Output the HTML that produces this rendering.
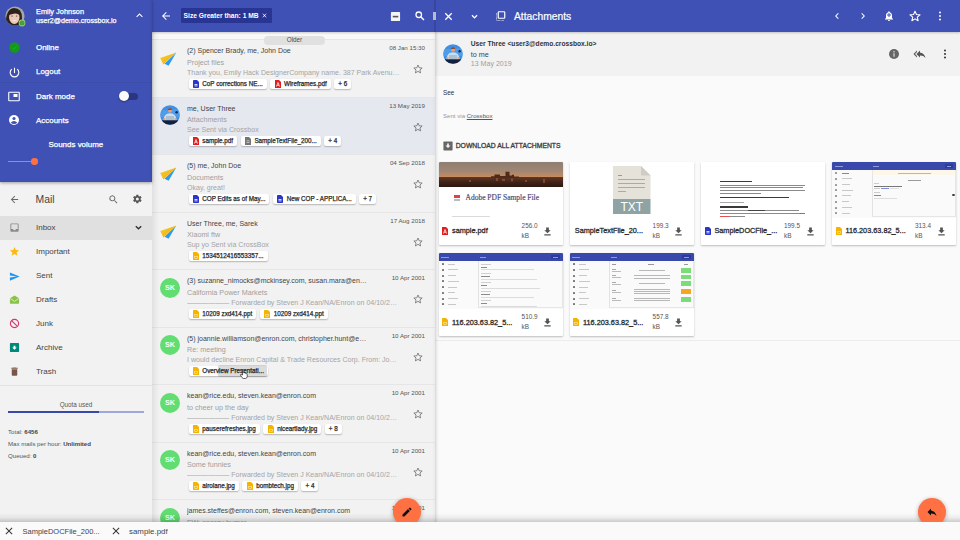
<!DOCTYPE html>
<html><head><meta charset="utf-8"><style>
*{margin:0;padding:0;box-sizing:border-box}
html,body{width:960px;height:540px;overflow:hidden;background:#fafafa;font-family:"Liberation Sans",sans-serif}
.abs{position:absolute}
svg{display:block}
#side{position:absolute;left:0;top:0;width:152px;height:540px;background:#f2f2f2}
#acct{position:absolute;left:0;top:0;width:152px;height:182px;background:#3f51b5;color:#fff;box-shadow:0 1px 3px rgba(0,0,0,.35)}
.mi{position:absolute;left:36px;font-size:7.95px;line-height:10px;-webkit-text-stroke:.25px #fff}
.si{position:absolute;left:36px;font-size:8px;color:#444;line-height:10px}
#list{position:absolute;left:152px;top:0;width:283px;height:540px;background:#f2f2f2;overflow:hidden;box-shadow:-1px 0 3px rgba(0,0,0,.25)}
.hdr{position:absolute;top:0;height:32px;background:#3f51b5}
.row{position:absolute;left:0;width:283px;height:57.5px;background:#f2f2f2}
.row::before{content:'';position:absolute;left:0;top:0;width:283px;height:1px;background:#e6e6e6}
.row.sel{background:#e6e8ef}
.av{position:absolute;left:8px;top:8.7px;width:20px;height:20px}
.av.plane{left:6px;top:8px;width:22px;height:22px}
.sk{width:20px;height:20px;border-radius:50%;background:#62dd72;color:#f4fff4;font-size:7.2px;font-weight:bold;text-align:center;line-height:20px}
.nm{position:absolute;left:35px;top:7px;width:180px;font-size:7px;line-height:9px;color:#444;white-space:nowrap;overflow:hidden;text-overflow:ellipsis}
.dt{position:absolute;right:10px;top:5.2px;font-size:6.2px;line-height:8px;color:#555;white-space:nowrap}
.sb{position:absolute;left:35px;top:18.4px;font-size:7.2px;line-height:9px;color:#9e9e9e;white-space:nowrap}
.pv{position:absolute;left:35px;top:28.3px;width:213px;font-size:7.05px;line-height:9px;color:#a5a5a5;white-space:nowrap;overflow:hidden;text-overflow:ellipsis}
.star{position:absolute;left:261px;top:25px}
.chips{position:absolute;left:36.5px;top:39.3px;height:10px;display:flex;gap:3.5px}
.chip{height:10px;background:#fff;border-radius:2px;box-shadow:0 1px 1.5px rgba(0,0,0,.25);display:flex;align-items:center;padding:0 4px 0 4.5px;gap:3.3px;font-size:6.3px;color:#2a2a2a;-webkit-text-stroke:.25px #2a2a2a;white-space:nowrap}
.chip svg{flex:none}
.chip span{position:relative;top:-.5px}
.chip.plus{justify-content:center;padding:0 4px}
#read{position:absolute;left:435px;top:0;width:525px;height:540px;background:#fafafa;box-shadow:-1px 0 3px rgba(0,0,0,.3)}
.card{position:absolute;width:124px;height:83px;background:#fff;box-shadow:0 1px 2px rgba(0,0,0,.25);border-radius:1px;overflow:hidden}
.thumb{position:absolute;left:0;top:0;width:124px;height:55.5px;overflow:hidden}
.cf{position:absolute;left:0;top:55.5px;width:124px;height:27.5px}
.cname{position:absolute;left:14px;top:8.8px;font-size:7.3px;line-height:9px;color:#2e2e2e;-webkit-text-stroke:.3px #2e2e2e;white-space:nowrap}
.csz{position:absolute;left:82.8px;top:3.6px;font-size:6.4px;line-height:10px;color:#555}
.cdl{position:absolute;left:103.7px;top:8px}
#bottom{position:absolute;left:0;top:521.5px;width:960px;height:18.5px;background:#fafafa}
#bshadow{position:absolute;left:0;top:513px;width:960px;height:8.5px;background:linear-gradient(rgba(0,0,0,0),rgba(0,0,0,.05) 50%,rgba(0,0,0,.19))}
.fab{position:absolute;width:28px;height:28px;border-radius:50%;background:#ff7043;box-shadow:0 1px 4px rgba(0,0,0,.3)}
</style></head>
<body><div id="read"><div class="abs" style="left:0;top:0;width:525px;height:32px;background:#3f51b5"></div><div class="abs" style="left:0;top:32px;width:525px;height:44px;background:#f2f2f2"></div><div class="abs" style="left:8.3px;top:44px"><svg width="20" height="20" viewBox="0 0 20 20"><defs><clipPath id="u3c"><circle cx="10" cy="10" r="9.8"/></clipPath></defs><g clip-path="url(#u3c)"><rect width="20" height="20" fill="#3f8fe3"/><path d="M0 6Q5 4 8 6Q13 3 20 5V12H0Z" fill="#5aa6ee" opacity=".6"/><path d="M3.5 16Q3.5 8.5 10 8.3Q16.5 8.5 16.5 16Z" fill="#c7def3"/><rect x="6" y="11" width="8" height="4.5" fill="#aebfcf"/><circle cx="4.6" cy="14" r="1.1" fill="#e8a27a"/><circle cx="15.4" cy="14" r="1.1" fill="#e8a27a"/><path d="M0 15.2H20V20H0Z" fill="#14213d"/><circle cx="10" cy="5.6" r="2.1" fill="#e8a27a"/><path d="M7.9 5.2Q8 3.1 10 3.2Q12.1 3.1 12.1 5.2Q11 4.3 7.9 5.2Z" fill="#8a3f1f"/><circle cx="16.6" cy="7.2" r="1.2" fill="#1d2a44"/></g></svg></div><div class="abs" style="left:35.8px;top:39.7px;font-size:6.66px;font-weight:bold;color:#333;white-space:nowrap">User Three &lt;user3@demo.crossbox.io&gt;</div><div class="abs" style="left:35.8px;top:50px;font-size:7.2px;color:#444;white-space:nowrap">to me</div><div class="abs" style="left:35.8px;top:59.7px;font-size:7.07px;color:#9e9e9e;white-space:nowrap">13 May 2019</div><svg class="abs" style="left:453px;top:48px" width="12" height="12" viewBox="0 0 24 24"><circle cx="12" cy="12" r="10" fill="#666"/><rect x="11" y="10.5" width="2" height="7" fill="#f2f2f2"/><circle cx="12" cy="7.5" r="1.3" fill="#f2f2f2"/></svg><svg class="abs" style="left:478px;top:48px" width="13" height="12" viewBox="0 0 24 24"><path d="M7 8V5l-7 7 7 7v-3l-4-4 4-4zm6 1V5l-7 7 7 7v-4.1c5 0 8.5 1.6 11 5.1-1-5-4-10-11-11z" fill="#555"/></svg><svg class="abs" style="left:504px;top:48px" width="12" height="12" viewBox="0 0 24 24"><circle cx="12" cy="5" r="2" fill="#333"/><circle cx="12" cy="12" r="2" fill="#333"/><circle cx="12" cy="19" r="2" fill="#333"/></svg><div class="abs" style="left:8px;top:89.3px;font-size:6.4px;color:#333">See</div><div class="abs" style="left:8px;top:111.5px;font-size:6.1px;color:#999;white-space:nowrap">Sent via <span style="color:#555;text-decoration:underline">Crossbox</span></div><svg class="abs" style="left:8px;top:141px" width="10" height="10" viewBox="0 0 24 24"><rect x="1" y="1" width="22" height="22" rx="2" fill="#666"/><path d="M12 17l-6-6h4V6h4v5h4z" fill="#f5f5f5"/></svg><div class="abs" style="left:20.7px;top:141.6px;font-size:6.8px;color:#3a3a3a;-webkit-text-stroke:.3px #3a3a3a;white-space:nowrap">DOWNLOAD ALL ATTACHMENTS</div></div><div id="cards"><div class="card" style="left:438.8px;top:162.2px"><div class="thumb" style="background:#fff"><div class="abs" style="left:0;top:0;width:124px;height:25px;background:linear-gradient(#8e7f74 0%,#a08672 35%,#bb8a64 54%,#c98d5e 59%,#5e3422 62%,#3e2216 82%,#2a1810 100%)"></div><svg class="abs" style="left:0;top:0" width="124" height="25" viewBox="0 0 124 25"><path d="M52 16V14.3H55.5V12.6H61V14H66.5V9.8H70.5V13.5H73V12.8H75V14.5H80V16Z" fill="#4e2a1a"/><path d="M57 16h2v3h-2zM63 17h3v2h-3zM72 16.5h2v3h-2zM30 18h2v2h-2zM104 17h2v4h-2zM86 18h2v2h-2z" fill="#b0603a" opacity=".55"/></svg><div class="abs" style="left:15.5px;top:33px;width:6px;height:6px;background:linear-gradient(#d44 0 45%,#fff 45% 60%,#bbb 60%)"></div><div class="abs" style="left:26.7px;top:31.3px;font-family:'Liberation Serif',serif;font-size:7.5px;line-height:9px;color:#50507a;-webkit-text-stroke:.2px #50507a;white-space:nowrap">Adobe PDF Sample File</div><div class="abs" style="left:13.7px;top:53.5px;width:38px;height:.7px;background:#dadada"></div></div><div class="cf"><div class="abs" style="left:3.7px;top:9.3px"><svg width="6" height="8" viewBox="0 0 12 16"><path d="M0 0H8L12 4V16H0Z" fill="#e02020"/><path d="M3 13L6 5L9 13M4.2 10.5H7.8" stroke="#fff" stroke-width="1.5" fill="none"/></svg></div><div class="cname" style="left:13.2px">sample.pdf</div><div class="csz">256.0<br>kB</div><svg class="cdl" width="11" height="11" viewBox="0 0 24 24"><path d="M19 9h-4V3H9v6H5l7 7 7-7zM5 18v2.5h14V18H5z" fill="#555"/></svg></div></div>
<div class="card" style="left:569.8px;top:162.2px"><div class="thumb" style="background:#fff"><svg class="abs" style="left:43.5px;top:3.8px" width="37.5" height="48" viewBox="0 0 37.5 48"><path d="M0 0H28L37.5 9.5V33H0Z" fill="#e4e2d9"/><path d="M28 0V9.5H37.5Z" fill="#cfcdc3"/><rect x="0" y="33" width="37.5" height="15" fill="#8fa3a4"/><text x="18.75" y="45" text-anchor="middle" font-family="Liberation Sans" font-size="12" fill="#fff">TXT</text><rect x="5" y="9" width="4" height="1" fill="#999"/><rect x="5" y="13" width="27" height="1" fill="#aaa"/><rect x="5" y="17" width="27" height="1" fill="#aaa"/><rect x="5" y="21" width="27" height="1" fill="#aaa"/><rect x="5" y="25" width="8" height="1" fill="#aaa"/></svg></div><div class="cf"><div class="cname" style="left:5px">SampleTextFile_20...</div><div class="csz">199.3<br>kB</div><svg class="cdl" width="11" height="11" viewBox="0 0 24 24"><path d="M19 9h-4V3H9v6H5l7 7 7-7zM5 18v2.5h14V18H5z" fill="#555"/></svg></div></div>
<div class="card" style="left:701.2px;top:162.2px"><div class="thumb" style="background:#fff"><div class="abs" style="left:19.1px;top:18.5px;width:31.8px;height:1.7px;background:#3a3a3a;"></div><div class="abs" style="left:19.1px;top:22.5px;width:84.4px;height:1.1px;background:#8a8a8a;"></div><div class="abs" style="left:19.1px;top:25.1px;width:83px;height:1.1px;background:#8a8a8a;"></div><div class="abs" style="left:19.1px;top:28px;width:84.4px;height:1.1px;background:#8a8a8a;"></div><div class="abs" style="left:19.1px;top:30.8px;width:40.7px;height:1.1px;background:#8a8a8a;"></div><div class="abs" style="left:19.1px;top:34.6px;width:68.8px;height:1.7px;background:#3a3a3a;"></div><div class="abs" style="left:19.1px;top:39.4px;width:23.5px;height:1.1px;background:#aaa;"></div><div class="abs" style="left:19.1px;top:44.3px;width:28.2px;height:1.7px;background:#3a3a3a;"></div><div class="abs" style="left:19.1px;top:48.2px;width:79.2px;height:1.1px;background:#8a8a8a;"></div><div class="abs" style="left:47px;top:48.2px;width:17px;height:1.1px;background:#444;"></div><div class="abs" style="left:19.1px;top:51.1px;width:80px;height:1.1px;background:#8a8a8a;"></div><div class="abs" style="left:99.2px;top:51.1px;width:4.3px;height:1.1px;background:#e45050;"></div><div class="abs" style="left:19.1px;top:53.8px;width:25px;height:1.1px;background:#8a8a8a;"></div><div class="abs" style="left:19.1px;top:53.8px;width:8.9px;height:1.1px;background:#e45050;"></div></div><div class="cf"><div class="abs" style="left:3.7px;top:9.3px"><svg width="6" height="8" viewBox="0 0 12 16"><path d="M0 1.5Q0 0 1.5 0H8L12 4V14.5Q12 16 10.5 16H1.5Q0 16 0 14.5Z" fill="#2b35c9"/><rect x="3" y="8" width="6" height="1.6" fill="#fff"/><rect x="3" y="11" width="6" height="1.6" fill="#fff"/></svg></div><div class="cname" style="left:13.2px">SampleDOCFile_...</div><div class="csz">199.5<br>kB</div><svg class="cdl" width="11" height="11" viewBox="0 0 24 24"><path d="M19 9h-4V3H9v6H5l7 7 7-7zM5 18v2.5h14V18H5z" fill="#555"/></svg></div></div>
<div class="card" style="left:832.2px;top:162.2px"><div class="thumb" style="background:#fafafa"><div class="abs" style="left:0px;top:0px;width:124px;height:8px;background:#3949ab;"></div><div class="abs" style="left:2.5px;top:3.4px;width:8px;height:1.2px;background:#8f9ad6;"></div><div class="abs" style="left:41px;top:3.4px;width:6px;height:1.2px;background:#8f9ad6;"></div><div class="abs" style="left:112.5px;top:2px;width:8.5px;height:4px;background:#2c3a9a;"></div><div class="abs" style="left:114.5px;top:3.5px;width:4.5px;height:1px;background:#8f9ad6;"></div><div class="abs" style="left:39.5px;top:8px;width:0.7px;height:46px;background:#e3e3e3;"></div><div class="abs" style="left:123.2px;top:8px;width:0.8px;height:46px;background:#e6e6e6;"></div><div class="abs" style="left:39.5px;top:53.6px;width:84.5px;height:0.8px;background:#e6e6e6;"></div><div class="abs" style="left:3px;top:9.8px;width:2px;height:2px;background:#999;border-radius:.5px"></div><div class="abs" style="left:9.5px;top:10.4px;width:7px;height:0.9px;background:#888;"></div><div class="abs" style="left:3px;top:15.5px;width:2px;height:2px;background:#999;border-radius:.5px"></div><div class="abs" style="left:9.5px;top:16.1px;width:10px;height:0.9px;background:#c8c8c8;"></div><div class="abs" style="left:3px;top:21.4px;width:2px;height:2px;background:#999;border-radius:.5px"></div><div class="abs" style="left:9.5px;top:22.0px;width:8px;height:0.9px;background:#c8c8c8;"></div><div class="abs" style="left:3px;top:26.9px;width:2px;height:2px;background:#999;border-radius:.5px"></div><div class="abs" style="left:9.5px;top:27.5px;width:11px;height:0.9px;background:#c8c8c8;"></div><div class="abs" style="left:3px;top:32.7px;width:2px;height:2px;background:#999;border-radius:.5px"></div><div class="abs" style="left:9.5px;top:33.300000000000004px;width:9px;height:0.9px;background:#c8c8c8;"></div><div class="abs" style="left:3px;top:38.5px;width:2px;height:2px;background:#999;border-radius:.5px"></div><div class="abs" style="left:9.5px;top:39.1px;width:7px;height:0.9px;background:#c8c8c8;"></div><div class="abs" style="left:3px;top:44.4px;width:2px;height:2px;background:#999;border-radius:.5px"></div><div class="abs" style="left:9.5px;top:45.0px;width:10px;height:0.9px;background:#c8c8c8;"></div><div class="abs" style="left:3px;top:50.1px;width:2px;height:2px;background:#999;border-radius:.5px"></div><div class="abs" style="left:9.5px;top:50.7px;width:8px;height:0.9px;background:#c8c8c8;"></div><div class="abs" style="left:66px;top:10.4px;width:33px;height:0.9px;background:#999;"></div><div class="abs" style="left:39.5px;top:8px;width:84px;height:4.6px;background:rgba(255,240,200,.35);"></div><div class="abs" style="left:76px;top:17.8px;width:13px;height:0.9px;background:#999;"></div><div class="abs" style="left:42px;top:20.6px;width:5px;height:0.8px;background:#ccc;"></div><div class="abs" style="left:42px;top:23.6px;width:28px;height:1px;background:#777;"></div><div class="abs" style="left:42px;top:26.3px;width:6px;height:0.8px;background:#ccc;"></div><div class="abs" style="left:49px;top:26.3px;width:8px;height:0.9px;background:#7e8fd6;"></div><div class="abs" style="left:58px;top:26.3px;width:9px;height:0.8px;background:#ddd;"></div><div class="abs" style="left:42px;top:29.9px;width:6px;height:0.8px;background:#ccc;"></div><div class="abs" style="left:42px;top:32.6px;width:7px;height:1px;background:#888;"></div><div class="abs" style="left:42px;top:35.5px;width:23px;height:0.8px;background:#ddd;"></div><div class="abs" style="left:119.5px;top:32px;width:3.2px;height:2.2px;background:#333;border-radius:50%"></div></div><div class="cf"><div class="abs" style="left:3.7px;top:9.3px"><svg width="6" height="8" viewBox="0 0 12 16"><path d="M0 1Q0 0 1 0H8L12 4V15Q12 16 11 16H1Q0 16 0 15Z" fill="#f4b400"/><rect x="3" y="8" width="6" height="5" fill="#fff" opacity=".9"/><rect x="4" y="9" width="4" height="3" fill="#f4b400"/></svg></div><div class="cname" style="left:13.2px">116.203.63.82_5...</div><div class="csz">313.4<br>kB</div><svg class="cdl" width="11" height="11" viewBox="0 0 24 24"><path d="M19 9h-4V3H9v6H5l7 7 7-7zM5 18v2.5h14V18H5z" fill="#555"/></svg></div></div>
<div class="card" style="left:438.8px;top:253.3px"><div class="thumb" style="background:#fafafa"><div class="abs" style="left:0px;top:0px;width:124px;height:8px;background:#3949ab;"></div><div class="abs" style="left:2.5px;top:3.4px;width:8px;height:1.2px;background:#8f9ad6;"></div><div class="abs" style="left:41px;top:3.4px;width:6px;height:1.2px;background:#8f9ad6;"></div><div class="abs" style="left:112.5px;top:2px;width:8.5px;height:4px;background:#2c3a9a;"></div><div class="abs" style="left:114.5px;top:3.5px;width:4.5px;height:1px;background:#8f9ad6;"></div><div class="abs" style="left:39.5px;top:8px;width:0.7px;height:46px;background:#e3e3e3;"></div><div class="abs" style="left:123.2px;top:8px;width:0.8px;height:46px;background:#e6e6e6;"></div><div class="abs" style="left:39.5px;top:53.6px;width:84.5px;height:0.8px;background:#e6e6e6;"></div><div class="abs" style="left:3px;top:9.8px;width:2px;height:2px;background:#777;border-radius:.5px"></div><div class="abs" style="left:9.5px;top:10.4px;width:7px;height:0.9px;background:#c8c8c8;"></div><div class="abs" style="left:3px;top:15.5px;width:2px;height:2px;background:#777;border-radius:.5px"></div><div class="abs" style="left:9.5px;top:16.1px;width:10px;height:0.9px;background:#c8c8c8;"></div><div class="abs" style="left:3px;top:21.4px;width:2px;height:2px;background:#777;border-radius:.5px"></div><div class="abs" style="left:9.5px;top:22.0px;width:8px;height:0.9px;background:#c8c8c8;"></div><div class="abs" style="left:3px;top:26.9px;width:2px;height:2px;background:#777;border-radius:.5px"></div><div class="abs" style="left:9.5px;top:27.5px;width:11px;height:0.9px;background:#c8c8c8;"></div><div class="abs" style="left:3px;top:32.7px;width:2px;height:2px;background:#777;border-radius:.5px"></div><div class="abs" style="left:9.5px;top:33.300000000000004px;width:9px;height:0.9px;background:#c8c8c8;"></div><div class="abs" style="left:3px;top:38.5px;width:2px;height:2px;background:#777;border-radius:.5px"></div><div class="abs" style="left:9.5px;top:39.1px;width:7px;height:0.9px;background:#c8c8c8;"></div><div class="abs" style="left:3px;top:44.4px;width:2px;height:2px;background:#777;border-radius:.5px"></div><div class="abs" style="left:9.5px;top:45.0px;width:10px;height:0.9px;background:#c8c8c8;"></div><div class="abs" style="left:3px;top:50.1px;width:2px;height:2px;background:#777;border-radius:.5px"></div><div class="abs" style="left:9.5px;top:50.7px;width:8px;height:0.9px;background:#c8c8c8;"></div><div class="abs" style="left:42px;top:10.799999999999999px;width:10px;height:0.8px;background:#d0d0d0;"></div><div class="abs" style="left:42px;top:13.3px;width:6px;height:1px;background:#8a8a8a;"></div><div class="abs" style="left:42px;top:16.2px;width:53px;height:0.7px;background:#dcdcdc;"></div><div class="abs" style="left:42px;top:19.6px;width:10px;height:0.8px;background:#d0d0d0;"></div><div class="abs" style="left:42px;top:22.5px;width:9px;height:1px;background:#8a8a8a;"></div><div class="abs" style="left:42px;top:25.4px;width:56px;height:0.7px;background:#dcdcdc;"></div><div class="abs" style="left:42px;top:28.8px;width:10px;height:0.8px;background:#d0d0d0;"></div><div class="abs" style="left:42px;top:31.700000000000003px;width:6px;height:1px;background:#8a8a8a;"></div><div class="abs" style="left:42px;top:34.6px;width:59px;height:0.7px;background:#dcdcdc;"></div><div class="abs" style="left:42px;top:37.800000000000004px;width:10px;height:0.8px;background:#d0d0d0;"></div><div class="abs" style="left:42px;top:41.0px;width:9px;height:1px;background:#8a8a8a;"></div><div class="abs" style="left:42px;top:43.800000000000004px;width:53px;height:0.7px;background:#dcdcdc;"></div><div class="abs" style="left:42px;top:47.2px;width:10px;height:0.8px;background:#d0d0d0;"></div><div class="abs" style="left:42px;top:50.2px;width:6px;height:1px;background:#8a8a8a;"></div><div class="abs" style="left:42px;top:53.0px;width:56px;height:0.7px;background:#dcdcdc;"></div></div><div class="cf"><div class="abs" style="left:3.7px;top:9.3px"><svg width="6" height="8" viewBox="0 0 12 16"><path d="M0 1Q0 0 1 0H8L12 4V15Q12 16 11 16H1Q0 16 0 15Z" fill="#f4b400"/><rect x="3" y="8" width="6" height="5" fill="#fff" opacity=".9"/><rect x="4" y="9" width="4" height="3" fill="#f4b400"/></svg></div><div class="cname" style="left:13.2px">116.203.63.82_5...</div><div class="csz">510.9<br>kB</div><svg class="cdl" width="11" height="11" viewBox="0 0 24 24"><path d="M19 9h-4V3H9v6H5l7 7 7-7zM5 18v2.5h14V18H5z" fill="#555"/></svg></div></div>
<div class="card" style="left:569.8px;top:253.3px"><div class="thumb" style="background:#fafafa"><div class="abs" style="left:0px;top:0px;width:124px;height:8px;background:#3949ab;"></div><div class="abs" style="left:2.5px;top:3.4px;width:8px;height:1.2px;background:#8f9ad6;"></div><div class="abs" style="left:41px;top:3.4px;width:6px;height:1.2px;background:#8f9ad6;"></div><div class="abs" style="left:112.5px;top:2px;width:8.5px;height:4px;background:#2c3a9a;"></div><div class="abs" style="left:114.5px;top:3.5px;width:4.5px;height:1px;background:#8f9ad6;"></div><div class="abs" style="left:39.5px;top:8px;width:0.7px;height:46px;background:#e3e3e3;"></div><div class="abs" style="left:123.2px;top:8px;width:0.8px;height:46px;background:#e6e6e6;"></div><div class="abs" style="left:39.5px;top:53.6px;width:84.5px;height:0.8px;background:#e6e6e6;"></div><div class="abs" style="left:3px;top:9.8px;width:2px;height:2px;background:#777;border-radius:.5px"></div><div class="abs" style="left:9.5px;top:10.4px;width:7px;height:0.9px;background:#c8c8c8;"></div><div class="abs" style="left:3px;top:15.5px;width:2px;height:2px;background:#777;border-radius:.5px"></div><div class="abs" style="left:9.5px;top:16.1px;width:10px;height:0.9px;background:#c8c8c8;"></div><div class="abs" style="left:3px;top:21.4px;width:2px;height:2px;background:#777;border-radius:.5px"></div><div class="abs" style="left:9.5px;top:22.0px;width:8px;height:0.9px;background:#c8c8c8;"></div><div class="abs" style="left:3px;top:26.9px;width:2px;height:2px;background:#777;border-radius:.5px"></div><div class="abs" style="left:9.5px;top:27.5px;width:11px;height:0.9px;background:#c8c8c8;"></div><div class="abs" style="left:3px;top:32.7px;width:2px;height:2px;background:#777;border-radius:.5px"></div><div class="abs" style="left:9.5px;top:33.300000000000004px;width:9px;height:0.9px;background:#c8c8c8;"></div><div class="abs" style="left:3px;top:38.5px;width:2px;height:2px;background:#777;border-radius:.5px"></div><div class="abs" style="left:9.5px;top:39.1px;width:7px;height:0.9px;background:#c8c8c8;"></div><div class="abs" style="left:3px;top:44.4px;width:2px;height:2px;background:#777;border-radius:.5px"></div><div class="abs" style="left:9.5px;top:45.0px;width:10px;height:0.9px;background:#c8c8c8;"></div><div class="abs" style="left:3px;top:50.1px;width:2px;height:2px;background:#777;border-radius:.5px"></div><div class="abs" style="left:9.5px;top:50.7px;width:8px;height:0.9px;background:#c8c8c8;"></div><div class="abs" style="left:42px;top:11.2px;width:4px;height:0.9px;background:#999;"></div><div class="abs" style="left:78px;top:11.2px;width:6px;height:0.9px;background:#999;"></div><div class="abs" style="left:114px;top:11.2px;width:4px;height:0.9px;background:#999;"></div><div class="abs" style="left:42px;top:15.600000000000001px;width:4px;height:0.8px;background:#aaa;"></div><div class="abs" style="left:42px;top:17.6px;width:9px;height:0.8px;background:#bbb;"></div><div class="abs" style="left:69.0px;top:16.700000000000003px;width:26px;height:0.8px;background:#b8b8b8;"></div><div class="abs" style="left:111px;top:14.900000000000002px;width:10.5px;height:4.4px;background:#7ddc7a;"></div><div class="abs" style="left:42px;top:22.2px;width:4px;height:0.8px;background:#aaa;"></div><div class="abs" style="left:42px;top:24.2px;width:9px;height:0.8px;background:#bbb;"></div><div class="abs" style="left:64.0px;top:22.2px;width:36px;height:0.8px;background:#b8b8b8;"></div><div class="abs" style="left:64.0px;top:24.400000000000002px;width:36px;height:0.8px;background:#b8b8b8;"></div><div class="abs" style="left:111px;top:21.5px;width:10.5px;height:4.4px;background:#7ddc7a;"></div><div class="abs" style="left:42px;top:28.8px;width:4px;height:0.8px;background:#aaa;"></div><div class="abs" style="left:42px;top:30.8px;width:9px;height:0.8px;background:#bbb;"></div><div class="abs" style="left:69.0px;top:29.900000000000002px;width:26px;height:0.8px;background:#b8b8b8;"></div><div class="abs" style="left:111px;top:28.1px;width:10.5px;height:4.4px;background:#7ddc7a;"></div><div class="abs" style="left:42px;top:36.7px;width:4px;height:0.8px;background:#aaa;"></div><div class="abs" style="left:42px;top:38.7px;width:9px;height:0.8px;background:#bbb;"></div><div class="abs" style="left:64.0px;top:35.6px;width:36px;height:0.8px;background:#b8b8b8;"></div><div class="abs" style="left:64.0px;top:37.800000000000004px;width:36px;height:0.8px;background:#b8b8b8;"></div><div class="abs" style="left:64.0px;top:40.00000000000001px;width:36px;height:0.8px;background:#b8b8b8;"></div><div class="abs" style="left:111px;top:36.0px;width:10.5px;height:4.4px;background:#f5a623;"></div><div class="abs" style="left:42px;top:44.6px;width:4px;height:0.8px;background:#aaa;"></div><div class="abs" style="left:42px;top:46.6px;width:9px;height:0.8px;background:#bbb;"></div><div class="abs" style="left:64.0px;top:44.6px;width:36px;height:0.8px;background:#b8b8b8;"></div><div class="abs" style="left:64.0px;top:46.800000000000004px;width:36px;height:0.8px;background:#b8b8b8;"></div><div class="abs" style="left:111px;top:43.9px;width:10.5px;height:4.4px;background:#7ddc7a;"></div></div><div class="cf"><div class="abs" style="left:3.7px;top:9.3px"><svg width="6" height="8" viewBox="0 0 12 16"><path d="M0 1Q0 0 1 0H8L12 4V15Q12 16 11 16H1Q0 16 0 15Z" fill="#f4b400"/><rect x="3" y="8" width="6" height="5" fill="#fff" opacity=".9"/><rect x="4" y="9" width="4" height="3" fill="#f4b400"/></svg></div><div class="cname" style="left:13.2px">116.203.63.82_5...</div><div class="csz">557.8<br>kB</div><svg class="cdl" width="11" height="11" viewBox="0 0 24 24"><path d="M19 9h-4V3H9v6H5l7 7 7-7zM5 18v2.5h14V18H5z" fill="#555"/></svg></div></div></div><div class="abs" style="left:435px;top:340px;width:525px;height:1px;background:#ececec"></div><div class="abs" style="left:435px;top:32px;width:4px;height:508px;background:linear-gradient(90deg,rgba(0,0,0,.09),rgba(0,0,0,0))"></div><div id="list"><div class="abs" style="left:0;top:32px;width:283px;height:8px;background:#f8f8f8"></div><div class="row" style="top:39.3px"><div class="av plane"><svg width="22" height="22" viewBox="0 0 22 22"><defs><linearGradient id="pg" x1="0" y1="0" x2="1" y2="1"><stop offset="0" stop-color="#f9d02a"/><stop offset=".6" stop-color="#f0b81c"/><stop offset="1" stop-color="#d9940e"/></linearGradient></defs><path d="M18.3 5.5L6.5 16.8L10.6 18.8Z" fill="#2a9bf0"/><path d="M18.3 5.5L2.2 11L5.4 17.5Z" fill="url(#pg)"/></svg></div>
<div class="nm">(2) Spencer Brady, me, John Doe</div><div class="dt">08 Jan 15:30</div>
<div class="sb">Project files</div><div class="pv">Thank you, Emily Hack DesignerCompany name. 387 Park Avenue South</div>
<svg class="star" width="10" height="10" viewBox="0 0 24 24"><path d="M12 2.5l2.9 6.6 7.1.6-5.4 4.7 1.6 7-6.2-3.7-6.2 3.7 1.6-7L2 9.7l7.1-.6z" fill="none" stroke="#6a6a6a" stroke-width="1.9" stroke-linejoin="round"/></svg>
<div class="chips"><div class="chip"><svg width="6" height="8" viewBox="0 0 12 16"><path d="M0 1.5Q0 0 1.5 0H8L12 4V14.5Q12 16 10.5 16H1.5Q0 16 0 14.5Z" fill="#2b35c9"/><rect x="3" y="8" width="6" height="1.6" fill="#fff"/><rect x="3" y="11" width="6" height="1.6" fill="#fff"/></svg><span>CoP corrections NE...</span></div><div class="chip"><svg width="6" height="8" viewBox="0 0 12 16"><path d="M0 0H8L12 4V16H0Z" fill="#e02020"/><path d="M3 13L6 5L9 13M4.2 10.5H7.8" stroke="#fff" stroke-width="1.5" fill="none"/></svg><span>Wireframes.pdf</span></div><div class="chip plus"><span>+ 6</span></div></div></div>
<div class="row sel" style="top:96.8px"><div class="av"><svg width="20" height="20" viewBox="0 0 20 20"><defs><clipPath id="u3c"><circle cx="10" cy="10" r="9.8"/></clipPath></defs><g clip-path="url(#u3c)"><rect width="20" height="20" fill="#3f8fe3"/><path d="M0 6Q5 4 8 6Q13 3 20 5V12H0Z" fill="#5aa6ee" opacity=".6"/><path d="M3.5 16Q3.5 8.5 10 8.3Q16.5 8.5 16.5 16Z" fill="#c7def3"/><rect x="6" y="11" width="8" height="4.5" fill="#aebfcf"/><circle cx="4.6" cy="14" r="1.1" fill="#e8a27a"/><circle cx="15.4" cy="14" r="1.1" fill="#e8a27a"/><path d="M0 15.2H20V20H0Z" fill="#14213d"/><circle cx="10" cy="5.6" r="2.1" fill="#e8a27a"/><path d="M7.9 5.2Q8 3.1 10 3.2Q12.1 3.1 12.1 5.2Q11 4.3 7.9 5.2Z" fill="#8a3f1f"/><circle cx="16.6" cy="7.2" r="1.2" fill="#1d2a44"/></g></svg></div>
<div class="nm">me, User Three</div><div class="dt">13 May 2019</div>
<div class="sb">Attachments</div><div class="pv">See Sent via Crossbox</div>
<svg class="star" width="10" height="10" viewBox="0 0 24 24"><path d="M12 2.5l2.9 6.6 7.1.6-5.4 4.7 1.6 7-6.2-3.7-6.2 3.7 1.6-7L2 9.7l7.1-.6z" fill="none" stroke="#6a6a6a" stroke-width="1.9" stroke-linejoin="round"/></svg>
<div class="chips"><div class="chip"><svg width="6" height="8" viewBox="0 0 12 16"><path d="M0 0H8L12 4V16H0Z" fill="#e02020"/><path d="M3 13L6 5L9 13M4.2 10.5H7.8" stroke="#fff" stroke-width="1.5" fill="none"/></svg><span>sample.pdf</span></div><div class="chip"><svg width="6" height="8" viewBox="0 0 12 16"><path d="M0 0H8L12 4V16H0Z" fill="#757575"/><rect x="3" y="7" width="6" height="1.4" fill="#ddd"/><rect x="3" y="10" width="6" height="1.4" fill="#ddd"/></svg><span>SampleTextFile_200...</span></div><div class="chip plus"><span>+ 4</span></div></div></div>
<div class="row" style="top:154.3px"><div class="av plane"><svg width="22" height="22" viewBox="0 0 22 22"><defs><linearGradient id="pg" x1="0" y1="0" x2="1" y2="1"><stop offset="0" stop-color="#f9d02a"/><stop offset=".6" stop-color="#f0b81c"/><stop offset="1" stop-color="#d9940e"/></linearGradient></defs><path d="M18.3 5.5L6.5 16.8L10.6 18.8Z" fill="#2a9bf0"/><path d="M18.3 5.5L2.2 11L5.4 17.5Z" fill="url(#pg)"/></svg></div>
<div class="nm">(5) me, John Doe</div><div class="dt">04 Sep 2018</div>
<div class="sb">Documents</div><div class="pv">Okay, great!</div>
<svg class="star" width="10" height="10" viewBox="0 0 24 24"><path d="M12 2.5l2.9 6.6 7.1.6-5.4 4.7 1.6 7-6.2-3.7-6.2 3.7 1.6-7L2 9.7l7.1-.6z" fill="none" stroke="#6a6a6a" stroke-width="1.9" stroke-linejoin="round"/></svg>
<div class="chips"><div class="chip"><svg width="6" height="8" viewBox="0 0 12 16"><path d="M0 1.5Q0 0 1.5 0H8L12 4V14.5Q12 16 10.5 16H1.5Q0 16 0 14.5Z" fill="#2b35c9"/><rect x="3" y="8" width="6" height="1.6" fill="#fff"/><rect x="3" y="11" width="6" height="1.6" fill="#fff"/></svg><span>COP Edits as of May...</span></div><div class="chip"><svg width="6" height="8" viewBox="0 0 12 16"><path d="M0 1.5Q0 0 1.5 0H8L12 4V14.5Q12 16 10.5 16H1.5Q0 16 0 14.5Z" fill="#2b35c9"/><rect x="3" y="8" width="6" height="1.6" fill="#fff"/><rect x="3" y="11" width="6" height="1.6" fill="#fff"/></svg><span>New COP - APPLICA...</span></div><div class="chip plus"><span>+ 7</span></div></div></div>
<div class="row" style="top:211.8px"><div class="av plane"><svg width="22" height="22" viewBox="0 0 22 22"><defs><linearGradient id="pg" x1="0" y1="0" x2="1" y2="1"><stop offset="0" stop-color="#f9d02a"/><stop offset=".6" stop-color="#f0b81c"/><stop offset="1" stop-color="#d9940e"/></linearGradient></defs><path d="M18.3 5.5L6.5 16.8L10.6 18.8Z" fill="#2a9bf0"/><path d="M18.3 5.5L2.2 11L5.4 17.5Z" fill="url(#pg)"/></svg></div>
<div class="nm">User Three, me, Sarek</div><div class="dt">17 Aug 2018</div>
<div class="sb">Xiaomi ftw</div><div class="pv">Sup yo Sent via CrossBox</div>
<svg class="star" width="10" height="10" viewBox="0 0 24 24"><path d="M12 2.5l2.9 6.6 7.1.6-5.4 4.7 1.6 7-6.2-3.7-6.2 3.7 1.6-7L2 9.7l7.1-.6z" fill="none" stroke="#6a6a6a" stroke-width="1.9" stroke-linejoin="round"/></svg>
<div class="chips"><div class="chip"><svg width="6" height="8" viewBox="0 0 12 16"><path d="M0 1Q0 0 1 0H8L12 4V15Q12 16 11 16H1Q0 16 0 15Z" fill="#f4b400"/><rect x="3" y="8" width="6" height="5" fill="#fff" opacity=".9"/><rect x="4" y="9" width="4" height="3" fill="#f4b400"/></svg><span>1534512416553357...</span></div></div></div>
<div class="row" style="top:269.3px"><div class="av"><div class="sk">SK</div></div>
<div class="nm">(3) suzanne_nimocks@mckinsey.com, susan.mara@enron.com</div><div class="dt">10 Apr 2001</div>
<div class="sb">California Power Markets</div><div class="pv">—————— Forwarded by Steven J Kean/NA/Enron on 04/10/2001</div>
<svg class="star" width="10" height="10" viewBox="0 0 24 24"><path d="M12 2.5l2.9 6.6 7.1.6-5.4 4.7 1.6 7-6.2-3.7-6.2 3.7 1.6-7L2 9.7l7.1-.6z" fill="none" stroke="#6a6a6a" stroke-width="1.9" stroke-linejoin="round"/></svg>
<div class="chips"><div class="chip"><svg width="6" height="8" viewBox="0 0 12 16"><path d="M0 1Q0 0 1 0H8L12 4V15Q12 16 11 16H1Q0 16 0 15Z" fill="#f4b400"/><rect x="3" y="8" width="6" height="5" fill="#fff" opacity=".9"/><rect x="4" y="9" width="4" height="3" fill="#f4b400"/></svg><span>10209 zxd414.ppt</span></div><div class="chip"><svg width="6" height="8" viewBox="0 0 12 16"><path d="M0 1Q0 0 1 0H8L12 4V15Q12 16 11 16H1Q0 16 0 15Z" fill="#f4b400"/><rect x="3" y="8" width="6" height="5" fill="#fff" opacity=".9"/><rect x="4" y="9" width="4" height="3" fill="#f4b400"/></svg><span>10209 zxd414.ppt</span></div></div></div>
<div class="row" style="top:326.8px"><div class="av"><div class="sk">SK</div></div>
<div class="nm">(5) joannie.williamson@enron.com, christopher.hunt@enron.com</div><div class="dt">10 Apr 2001</div>
<div class="sb">Re: meeting</div><div class="pv">I would decline Enron Capital &amp; Trade Resources Corp. From: Joannie</div>
<svg class="star" width="10" height="10" viewBox="0 0 24 24"><path d="M12 2.5l2.9 6.6 7.1.6-5.4 4.7 1.6 7-6.2-3.7-6.2 3.7 1.6-7L2 9.7l7.1-.6z" fill="none" stroke="#6a6a6a" stroke-width="1.9" stroke-linejoin="round"/></svg>
<div class="chips"><div class="chip"><svg width="6" height="8" viewBox="0 0 12 16"><path d="M0 1Q0 0 1 0H8L12 4V15Q12 16 11 16H1Q0 16 0 15Z" fill="#f4b400"/><rect x="3" y="8" width="6" height="5" fill="#fff" opacity=".9"/><rect x="4" y="9" width="4" height="3" fill="#f4b400"/></svg><span>Overview Presentati...</span></div></div><div class="abs" style="left:66px;top:38.6px;width:49px;height:12px;border-radius:2px;background:rgba(0,0,0,.14)"></div><svg class="abs" style="left:87.5px;top:42.5px" width="8" height="10" viewBox="0 0 16 20"><path d="M5 1.5Q6.5 0.5 7.5 1.5V8L8.5 7.5Q10 7 10.5 8.5Q12 8 12.5 9.5Q14 9 14.5 11V15Q14 18.5 11 19H7.5Q5.5 19 4 17L1 12.5Q0.5 11 2 10.8L5 12Z" fill="#fff" stroke="#111" stroke-width="1.3" stroke-linejoin="round"/></svg></div>
<div class="row" style="top:384.3px"><div class="av"><div class="sk">SK</div></div>
<div class="nm">kean@rice.edu, steven.kean@enron.com</div><div class="dt">10 Apr 2001</div>
<div class="sb">to cheer up the day</div><div class="pv">—————— Forwarded by Steven J Kean/NA/Enron on 04/10/2001</div>
<svg class="star" width="10" height="10" viewBox="0 0 24 24"><path d="M12 2.5l2.9 6.6 7.1.6-5.4 4.7 1.6 7-6.2-3.7-6.2 3.7 1.6-7L2 9.7l7.1-.6z" fill="none" stroke="#6a6a6a" stroke-width="1.9" stroke-linejoin="round"/></svg>
<div class="chips"><div class="chip"><svg width="6" height="8" viewBox="0 0 12 16"><path d="M0 1Q0 0 1 0H8L12 4V15Q12 16 11 16H1Q0 16 0 15Z" fill="#f4b400"/><rect x="3" y="8" width="6" height="5" fill="#fff" opacity=".9"/><rect x="4" y="9" width="4" height="3" fill="#f4b400"/></svg><span>pauserefreshes.jpg</span></div><div class="chip"><svg width="6" height="8" viewBox="0 0 12 16"><path d="M0 1Q0 0 1 0H8L12 4V15Q12 16 11 16H1Q0 16 0 15Z" fill="#f4b400"/><rect x="3" y="8" width="6" height="5" fill="#fff" opacity=".9"/><rect x="4" y="9" width="4" height="3" fill="#f4b400"/></svg><span>niceartlady.jpg</span></div><div class="chip plus"><span>+ 8</span></div></div></div>
<div class="row" style="top:441.8px"><div class="av"><div class="sk">SK</div></div>
<div class="nm">kean@rice.edu, steven.kean@enron.com</div><div class="dt">10 Apr 2001</div>
<div class="sb">Some funnies</div><div class="pv">—————— Forwarded by Steven J Kean/NA/Enron on 04/10/2001</div>
<svg class="star" width="10" height="10" viewBox="0 0 24 24"><path d="M12 2.5l2.9 6.6 7.1.6-5.4 4.7 1.6 7-6.2-3.7-6.2 3.7 1.6-7L2 9.7l7.1-.6z" fill="none" stroke="#6a6a6a" stroke-width="1.9" stroke-linejoin="round"/></svg>
<div class="chips"><div class="chip"><svg width="6" height="8" viewBox="0 0 12 16"><path d="M0 1Q0 0 1 0H8L12 4V15Q12 16 11 16H1Q0 16 0 15Z" fill="#f4b400"/><rect x="3" y="8" width="6" height="5" fill="#fff" opacity=".9"/><rect x="4" y="9" width="4" height="3" fill="#f4b400"/></svg><span>airolane.jpg</span></div><div class="chip"><svg width="6" height="8" viewBox="0 0 12 16"><path d="M0 1Q0 0 1 0H8L12 4V15Q12 16 11 16H1Q0 16 0 15Z" fill="#f4b400"/><rect x="3" y="8" width="6" height="5" fill="#fff" opacity=".9"/><rect x="4" y="9" width="4" height="3" fill="#f4b400"/></svg><span>bombtech.jpg</span></div><div class="chip plus"><span>+ 4</span></div></div></div>
<div class="row" style="top:499.3px"><div class="av"><div class="sk">SK</div></div>
<div class="nm">james.steffes@enron.com, steven.kean@enron.com</div><div class="dt">10 Apr 2001</div>
<div class="sb">FW: energy humor</div><div class="pv"></div>
<svg class="star" width="10" height="10" viewBox="0 0 24 24"><path d="M12 2.5l2.9 6.6 7.1.6-5.4 4.7 1.6 7-6.2-3.7-6.2 3.7 1.6-7L2 9.7l7.1-.6z" fill="none" stroke="#6a6a6a" stroke-width="1.9" stroke-linejoin="round"/></svg>
<div class="chips"></div></div><div class="abs" style="left:112px;top:36px;width:61px;height:8.5px;border-radius:4px;background:#e0e0e0;font-size:6.3px;line-height:8.5px;text-align:center;color:#4a4a4a">Older</div><div class="abs" style="left:0;top:0;width:7px;height:540px;background:linear-gradient(90deg,rgba(0,0,0,.07),rgba(0,0,0,0))"></div><div class="abs" style="left:280px;top:32px;width:3px;height:508px;background:linear-gradient(90deg,rgba(0,0,0,0),rgba(0,0,0,.03))"></div></div><div class="abs" style="left:152px;top:0;width:808px;height:32px;background:#3f51b5;box-shadow:0 1px 2px rgba(0,0,0,.2)"></div><div class="abs" style="left:434px;top:0;width:2px;height:32px;background:rgba(0,0,0,.12)"></div><svg class="abs" style="left:160px;top:10px" width="12" height="12" viewBox="0 0 24 24"><path d="M20 11H7.8l5.6-5.6L12 4l-8 8 8 8 1.4-1.4L7.8 13H20z" fill="#fff"/></svg><div class="abs" style="left:180.5px;top:8px;width:91px;height:15.4px;background:#283593;border-radius:1px"></div><div class="abs" style="left:183.6px;top:12px;font-size:6.7px;font-weight:bold;color:#fff;white-space:nowrap">Size Greater than: 1 MB</div><svg class="abs" style="left:261px;top:12.3px" width="7" height="7" viewBox="0 0 24 24"><path d="M19 6.4L17.6 5 12 10.6 6.4 5 5 6.4 10.6 12 5 17.6 6.4 19 12 13.4 17.6 19 19 17.6 13.4 12z" fill="#fff"/></svg><svg class="abs" style="left:390px;top:10.5px" width="11" height="11" viewBox="0 0 24 24"><rect x="2" y="2" width="20" height="20" rx="2" fill="#f4f4f4"/><rect x="6" y="10.5" width="12" height="3.5" fill="#555"/></svg><svg class="abs" style="left:414px;top:10px" width="12" height="12" viewBox="0 0 24 24"><circle cx="9.5" cy="9.5" r="5.5" stroke="#fff" stroke-width="2.6" fill="none"/><path d="M13.5 13.5L20 20" stroke="#fff" stroke-width="3"/></svg><div class="abs" style="left:433px;top:12px;width:2.8px;height:8px;background:#b8bcc8"></div><svg class="abs" style="left:443px;top:10.5px" width="11" height="11" viewBox="0 0 24 24"><path d="M5 5L19 19M19 5L5 19" stroke="#fff" stroke-width="2.8"/></svg><svg class="abs" style="left:469px;top:10.5px" width="11" height="11" viewBox="0 0 24 24"><path d="M6.5 9.5L12 15L17.5 9.5" stroke="#fff" stroke-width="3" fill="none"/></svg><svg class="abs" style="left:495px;top:10px" width="12" height="12" viewBox="0 0 24 24"><path d="M3 6V21H18" stroke="#c5cae9" stroke-width="1.8" stroke-dasharray="1.6 1" fill="none"/><rect x="6.5" y="3.5" width="13" height="13" rx="1.5" fill="none" stroke="#fff" stroke-width="2.4"/></svg><div class="abs" style="left:514px;top:11px;font-size:10.3px;color:#fff;-webkit-text-stroke:.2px #fff;white-space:nowrap">Attachments</div><svg class="abs" style="left:831px;top:10px" width="12" height="12" viewBox="0 0 24 24"><path d="M15.4 7.4L14 6l-6 6 6 6 1.4-1.4-4.6-4.6z" fill="#fff"/></svg><svg class="abs" style="left:857px;top:10px" width="12" height="12" viewBox="0 0 24 24"><path d="M10 6L8.6 7.4l4.6 4.6-4.6 4.6L10 18l6-6z" fill="#fff"/></svg><svg class="abs" style="left:883px;top:10px" width="12" height="12" viewBox="0 0 24 24"><path d="M12 22c1.1 0 2-.9 2-2h-4c0 1.1.9 2 2 2zm6-6v-5c0-3.1-1.6-5.6-4.5-6.3V4c0-.8-.7-1.5-1.5-1.5s-1.5.7-1.5 1.5v.7C7.6 5.4 6 7.9 6 11v5l-2 2v1h16v-1l-2-2zm-2-5h-3v3h-2v-3H8V9h3V6h2v3h3z" fill="#fff"/></svg><svg class="abs" style="left:909px;top:10px" width="12" height="12" viewBox="0 0 24 24"><path d="M12 2.5l2.9 6.6 7.1.6-5.4 4.7 1.6 7-6.2-3.7-6.2 3.7 1.6-7L2 9.7l7.1-.6z" fill="none" stroke="#fff" stroke-width="2.2" stroke-linejoin="round"/></svg><svg class="abs" style="left:934px;top:10px" width="12" height="12" viewBox="0 0 24 24"><circle cx="12" cy="5" r="2" fill="#fff"/><circle cx="12" cy="12" r="2" fill="#fff"/><circle cx="12" cy="19" r="2" fill="#fff"/></svg><div id="side"><div id="acct"><svg class="abs" style="left:5.3px;top:6.3px" width="24" height="24" viewBox="0 0 24 24"><defs><clipPath id="cav"><circle cx="10" cy="10" r="9.6"/></clipPath></defs><g clip-path="url(#cav)"><rect width="20" height="20" fill="#a9a7a4"/><path d="M1 20Q0 3 9 2Q17 2 17 12Q17 18 15 20Z" fill="#2e211b"/><ellipse cx="9.3" cy="11.3" rx="5.2" ry="6.6" fill="#eccab8"/><path d="M4 9Q5 3.5 10 3.8Q14 4.5 14.5 9Q11.5 5.8 4 9Z" fill="#2e211b"/><path d="M6.8 13.8Q9.5 16 12 13.8Q9.5 14.8 6.8 13.8Z" fill="#fff"/><ellipse cx="7" cy="10" rx=".8" ry=".5" fill="#5a3a30"/><ellipse cx="11.6" cy="10" rx=".8" ry=".5" fill="#5a3a30"/></g><circle cx="17" cy="17" r="3.4" fill="#9ccc65"/><circle cx="17" cy="17" r="2.5" fill="#43a047"/></svg><div class="mi" style="top:7px;font-size:7.4px">Emily Johnson</div><div class="mi" style="top:16px;font-size:7.1px">user2@demo.crossbox.io</div><svg class="abs" style="left:132.5px;top:9px" width="13" height="13" viewBox="0 0 24 24"><path d="M7.4 15.4L12 10.8l4.6 4.6L18 14l-6-6-6 6z" fill="#fff"/></svg><svg class="abs" style="left:8.5px;top:42.2px" width="11" height="11" viewBox="0 0 22 22"><circle cx="11" cy="11" r="10.5" fill="#139a1a"/><path d="M6.5 11.5l3 3 6-6" stroke="#2fb236" stroke-width="1.5" fill="none"/></svg><div class="mi" style="top:42.5px;">Online</div><svg class="abs" style="left:7.5px;top:65.5px" width="13" height="13" viewBox="0 0 24 24"><path d="M13 3h-2v10h2V3zm4.8 2.2l-1.4 1.4A7 7 0 1 1 7.6 6.6L6.2 5.2A9 9 0 1 0 17.8 5.2z" fill="#fff"/></svg><div class="mi" style="top:67px;">Logout</div><div class="abs" style="left:0px;top:81.7px;width:152px;height:0.8px;background:rgba(0,0,0,.06);"></div><svg class="abs" style="left:8px;top:90.5px" width="12" height="11" viewBox="0 0 24 22"><rect x="1.5" y="2.5" width="21" height="17" rx="1" fill="none" stroke="#fff" stroke-width="2.2"/><rect x="11" y="6" width="8" height="6" fill="#fff"/></svg><div class="mi" style="top:91.7px;">Dark mode</div><div class="abs" style="left:119px;top:92.5px;width:19px;height:7px;border-radius:4px;background:#2a3780"></div><div class="abs" style="left:119px;top:91px;width:10px;height:10px;border-radius:50%;background:#fafafa;box-shadow:0 1px 2px rgba(0,0,0,.3)"></div><svg class="abs" style="left:8px;top:114px" width="12" height="12" viewBox="0 0 24 24"><circle cx="12" cy="12" r="10" fill="#fff"/><circle cx="12" cy="9" r="3.2" fill="#3f51b5"/><path d="M5.5 17.5Q8 13.8 12 13.8Q16 13.8 18.5 17.5Q16 20 12 20Q8 20 5.5 17.5Z" fill="#3f51b5"/></svg><div class="mi" style="top:115.7px;">Accounts</div><div class="mi" style="top:139.5px;left:48.5px">Sounds volume</div><div class="abs" style="left:8px;top:161px;width:26px;height:1px;background:#ff7043"></div><div class="abs" style="left:31px;top:158.2px;width:6.6px;height:6.6px;border-radius:50%;background:#ff7043"></div><div class="abs" style="left:148.5px;top:0px;width:3.5px;height:182px;background:linear-gradient(90deg,rgba(0,0,0,0),rgba(0,0,0,.07));"></div></div><svg class="abs" style="left:9px;top:194px" width="11" height="11" viewBox="0 0 24 24"><path d="M20 11H7.8l5.6-5.6L12 4l-8 8 8 8 1.4-1.4L7.8 13H20z" fill="#666"/></svg><div class="si" style="top:194px;font-size:10.4px;line-height:12px;left:35.5px">Mail</div><svg class="abs" style="left:107.5px;top:193.5px" width="11" height="11" viewBox="0 0 24 24"><path d="M15.5 14h-.8l-.3-.3A6.5 6.5 0 1 0 9.5 16a6.5 6.5 0 0 0 4.2-1.6l.3.3v.8l5 5 1.5-1.5-5-5zm-6 0a4.5 4.5 0 1 1 0-9 4.5 4.5 0 0 1 0 9z" fill="#666"/></svg><svg class="abs" style="left:131px;top:193px" width="12" height="12" viewBox="0 0 24 24"><path d="M19.1 12.9a7 7 0 0 0 0-1.8l2.1-1.6-2-3.5-2.5 1a7 7 0 0 0-1.6-.9L14.7 3.5h-4l-.4 2.6a7 7 0 0 0-1.6.9l-2.5-1-2 3.5 2.1 1.6a7 7 0 0 0 0 1.8L4.2 14.5l2 3.5 2.5-1a7 7 0 0 0 1.6.9l.4 2.6h4l.4-2.6a7 7 0 0 0 1.6-.9l2.5 1 2-3.5zM12.7 15a3 3 0 1 1 0-6 3 3 0 0 1 0 6z" fill="#555"/></svg><div class="abs" style="left:0;top:215.5px;width:152px;height:24px;background:#e0e0e0"></div><svg class="abs" style="left:8.5px;top:222px" width="11" height="11" viewBox="0 0 24 24"><path d="M19 3H5a2 2 0 0 0-2 2v14a2 2 0 0 0 2 2h14a2 2 0 0 0 2-2V5a2 2 0 0 0-2-2zm0 12h-4a3 3 0 0 1-6 0H5V5h14z" fill="#8a8a8a"/></svg><div class="si" style="top:223.0px">Inbox</div><svg class="abs" style="left:131.5px;top:220.8px" width="13" height="13" viewBox="0 0 24 24"><path d="M7 9.5L12 14.5L17 9.5" stroke="#333" stroke-width="2.6" fill="none"/></svg><svg class="abs" style="left:8.5px;top:246px" width="11" height="11" viewBox="0 0 24 24"><path d="M12 17.3l6.2 3.7-1.6-7L22 9.2l-7.2-.6L12 2 9.2 8.6 2 9.2 7.5 14l-1.7 7z" fill="#fbb917"/></svg><div class="si" style="top:247.0px">Important</div><svg class="abs" style="left:8.5px;top:270.5px" width="11" height="11" viewBox="0 0 24 24"><path d="M2 21l21-9L2 3v7l15 2-15 2z" fill="#2196f3"/></svg><div class="si" style="top:271.0px">Sent</div><svg class="abs" style="left:8.5px;top:294px" width="11" height="11" viewBox="0 0 24 24"><path d="M22 9.5L12 3 2 9.5V20a1 1 0 0 0 1 1h18a1 1 0 0 0 1-1z" fill="#8bc34a"/><path d="M2 9.5l10 6.5 10-6.5" stroke="#e8f5e9" stroke-width="1.6" fill="none"/></svg><div class="si" style="top:295.0px">Drafts</div><svg class="abs" style="left:8.5px;top:318px" width="11" height="11" viewBox="0 0 24 24"><circle cx="12" cy="12" r="9" fill="none" stroke="#d6336c" stroke-width="2.4"/><path d="M5.6 5.6l12.8 12.8" stroke="#d6336c" stroke-width="2.4"/></svg><div class="si" style="top:319.0px">Junk</div><svg class="abs" style="left:8.5px;top:342px" width="11" height="11" viewBox="0 0 24 24"><rect x="2" y="2" width="20" height="20" rx="2" fill="#00897b"/><path d="M12 17l-5-5h3V8h4v4h3z" fill="#fff"/></svg><div class="si" style="top:343.0px">Archive</div><svg class="abs" style="left:8.5px;top:366px" width="11" height="11" viewBox="0 0 24 24"><path d="M6 19a2 2 0 0 0 2 2h8a2 2 0 0 0 2-2V7H6zM19 4h-3.5l-1-1h-5l-1 1H5v2h14z" fill="#795548"/></svg><div class="si" style="top:367.0px">Trash</div><div class="abs" style="left:0;top:384.5px;width:152px;height:1px;background:#e3e3e3"></div><div class="abs" style="left:0;top:401.2px;width:152px;text-align:center;font-size:6.3px;color:#555">Quota used</div><div class="abs" style="left:8px;top:411px;width:136px;height:1.8px;background:#9fa8da"></div><div class="abs" style="left:8px;top:411px;width:91px;height:1.8px;background:#3949ab"></div><div class="abs" style="left:8px;top:428px;font-size:6.1px;color:#555;white-space:nowrap">Total: <b style="color:#444">6456</b></div><div class="abs" style="left:8px;top:440px;font-size:6.1px;color:#555;white-space:nowrap">Max mails per hour: <b style="color:#444">Unlimited</b></div><div class="abs" style="left:8px;top:452px;font-size:6.1px;color:#555;white-space:nowrap">Queued: <b style="color:#444">0</b></div></div><div id="bshadow"></div><div class="fab" style="left:393.3px;top:498.2px"><svg class="abs" style="left:8px;top:8px" width="12" height="12" viewBox="0 0 24 24"><path d="M3 17.2V21h3.8L17.8 10 14 6.2zM20.7 7a1 1 0 0 0 0-1.4l-2.3-2.3a1 1 0 0 0-1.4 0l-1.8 1.8 3.7 3.7z" fill="#111"/></svg></div><div class="fab" style="left:918px;top:498.2px"><svg class="abs" style="left:8px;top:8px" width="12" height="12" viewBox="0 0 24 24"><path d="M10 9V5l-7 7 7 7v-4.1c5 0 8.5 1.6 11 5.1-1-5-4-10-11-11z" fill="#111"/></svg></div><div id="bottom"><svg class="abs" style="left:3px;top:3.5px" width="12" height="12" viewBox="0 0 24 24"><path d="M19 6.4L17.6 5 12 10.6 6.4 5 5 6.4 10.6 12 5 17.6 6.4 19 12 13.4 17.6 19 19 17.6 13.4 12z" fill="#333"/></svg><div class="abs" style="left:22.5px;top:5.3px;font-size:7.5px;color:#444;white-space:nowrap">SampleDOCFile_200...</div><svg class="abs" style="left:109.5px;top:3.5px" width="12" height="12" viewBox="0 0 24 24"><path d="M19 6.4L17.6 5 12 10.6 6.4 5 5 6.4 10.6 12 5 17.6 6.4 19 12 13.4 17.6 19 19 17.6 13.4 12z" fill="#333"/></svg><div class="abs" style="left:129px;top:5px;font-size:7.9px;color:#444;white-space:nowrap">sample.pdf</div></div></body></html>
